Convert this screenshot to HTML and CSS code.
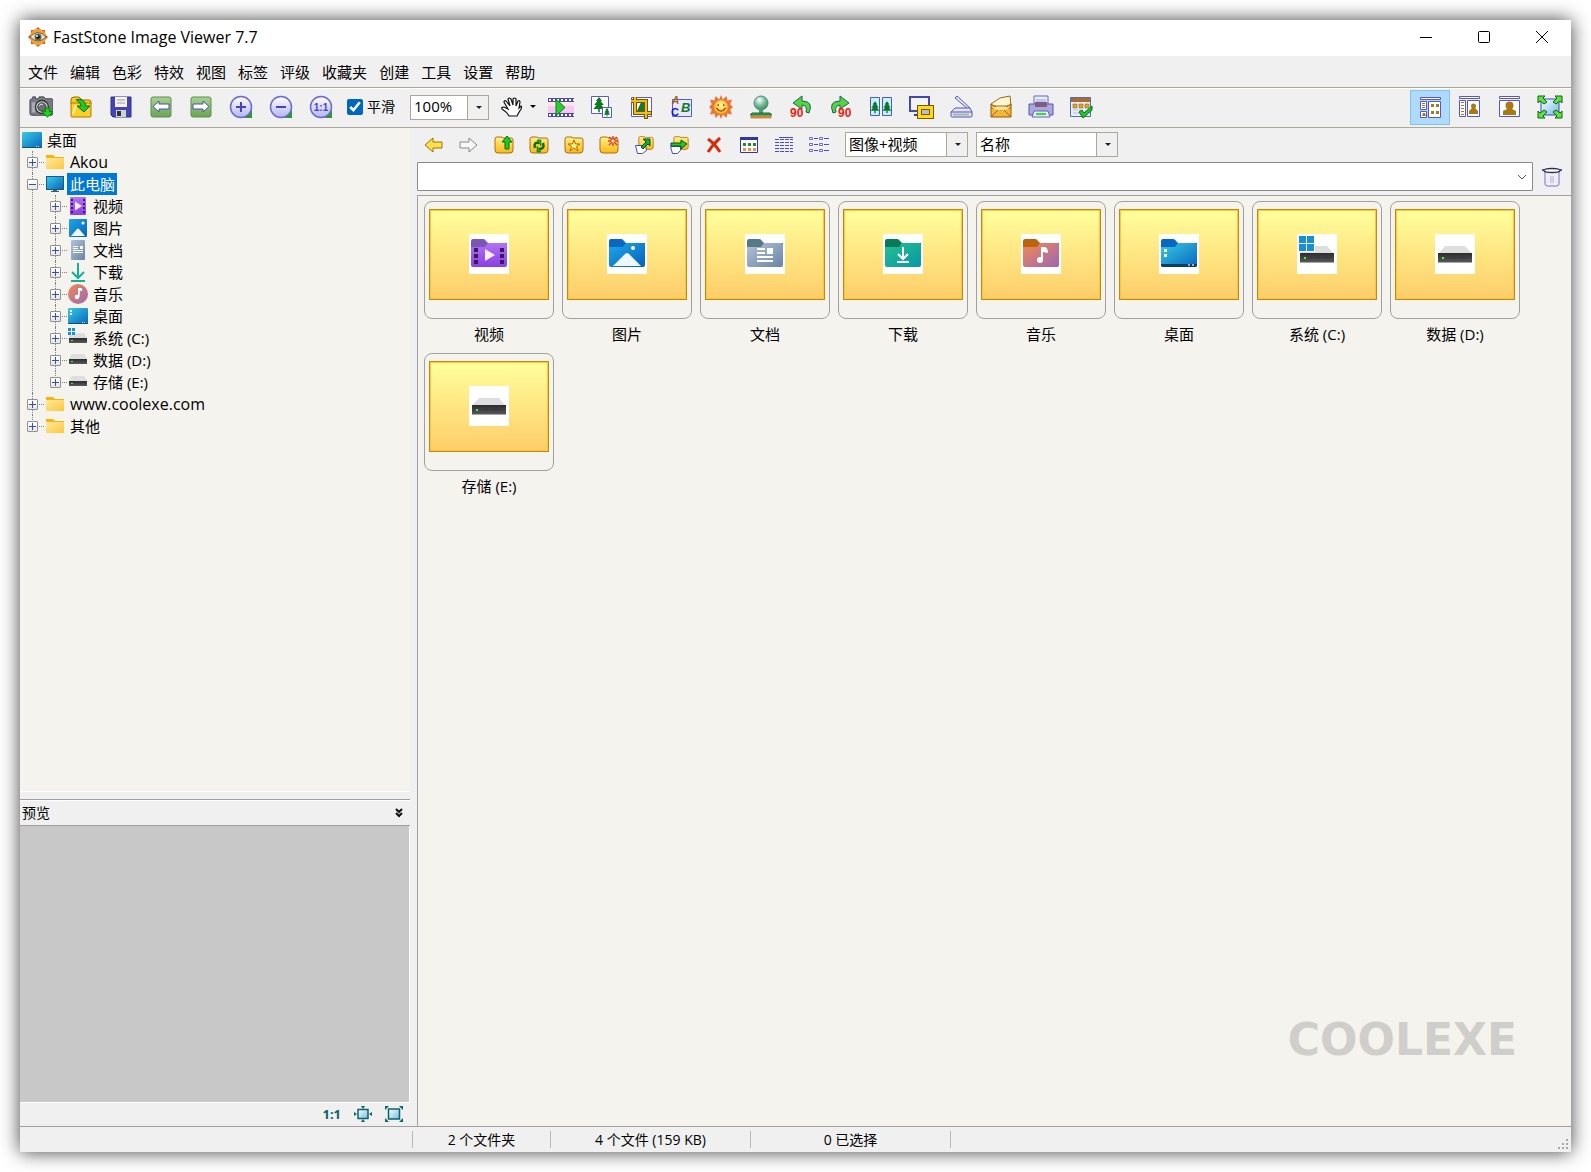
FILE: index.html
```html
<!DOCTYPE html>
<html lang="zh-CN">
<head>
    <meta charset="UTF-8">
    <meta name="viewport" content="width=device-width, initial-scale=1.0">
    <title>FastStone Image Viewer 7.7</title>
    <link rel="stylesheet" href="styles.css">
</head>
<body>
    <!-- 共用图标 -->
    <svg class="sprite" aria-hidden="true">
        <defs>
            <linearGradient id="gBlue" x1="0" y1="0" x2="1" y2="1"><stop offset="0" stop-color="#36cbe4"/><stop offset="1" stop-color="#0a66bd"/></linearGradient>
            <linearGradient id="gPic" x1="0" y1="0" x2="1" y2="1"><stop offset="0" stop-color="#1fa8ea"/><stop offset="1" stop-color="#0461b8"/></linearGradient>
            <linearGradient id="gPurple" x1="0" y1="0" x2="0" y2="1"><stop offset="0" stop-color="#b273f5"/><stop offset="1" stop-color="#8b3fe0"/></linearGradient>
            <linearGradient id="gDoc" x1="0" y1="0" x2="1" y2="1"><stop offset="0" stop-color="#b3c3d8"/><stop offset="1" stop-color="#6a84a5"/></linearGradient>
            <linearGradient id="gGreen" x1="0" y1="0" x2="1" y2="1"><stop offset="0" stop-color="#27c08c"/><stop offset="1" stop-color="#0697a8"/></linearGradient>
            <linearGradient id="gMusic" x1="0" y1="0" x2="1" y2="1"><stop offset="0" stop-color="#f38a52"/><stop offset="1" stop-color="#9d66b4"/></linearGradient>
            <linearGradient id="gFolder" x1="0" y1="0" x2="1" y2="1"><stop offset="0" stop-color="#ffe9a0"/><stop offset="1" stop-color="#fdc739"/></linearGradient>
            <linearGradient id="gGold" x1="0" y1="0" x2="0" y2="1"><stop offset="0" stop-color="#fff08a"/><stop offset="1" stop-color="#fdb813"/></linearGradient>
            <linearGradient id="gDrive" x1="0" y1="0" x2="0" y2="1"><stop offset="0" stop-color="#2c2c2e"/><stop offset="1" stop-color="#5a5a5c"/></linearGradient>
            <linearGradient id="gLens" x1="0" y1="0" x2="0" y2="1"><stop offset="0" stop-color="#ffffff"/><stop offset="1" stop-color="#b4b4f2"/></linearGradient>
            <linearGradient id="gNav" x1="0" y1="0" x2="0" y2="1"><stop offset="0" stop-color="#a9d28e"/><stop offset="1" stop-color="#69a554"/></linearGradient>
            <linearGradient id="gGlass" x1="0" y1="0" x2="1" y2="1"><stop offset="0" stop-color="#ffffff"/><stop offset="1" stop-color="#6fbbe8"/></linearGradient>
            <radialGradient id="gBall" cx=".4" cy=".3" r=".7"><stop offset="0" stop-color="#ffffff"/><stop offset=".5" stop-color="#7cc79a"/><stop offset="1" stop-color="#3f8a66"/></radialGradient>
            <radialGradient id="gSun" cx=".5" cy=".4" r=".6"><stop offset="0" stop-color="#fff6a0"/><stop offset="1" stop-color="#f6a81c"/></radialGradient>
        </defs>

        <!-- 文件夹与驱动器 -->
        <symbol id="i-folder" viewBox="0 0 20 20"><path d="M1 3h7l2 2h9v12H1z" fill="#f7b50c"/><path d="M1 6h18v11H1z" fill="url(#gFolder)"/></symbol>
        <symbol id="i-pc" viewBox="0 0 20 20"><path d="M1 2h18v14H1z" fill="#0e5d8c"/><path d="M2 3h16v12H2z" fill="url(#gBlue)"/><path d="M8 16h4v1h2v1H6v-1h2z" fill="#555"/></symbol>
        <symbol id="i-desktop" viewBox="0 0 20 20"><rect y="2" width="20" height="16" rx="1" fill="url(#gBlue)"/><path d="M0 17h20q0 1-1 1H1q-1 0-1-1z" fill="#07517f"/><path d="M14 16h1v1h-1zM16 16h1v1h-1z" fill="#cde"/></symbol>
        <symbol id="i-desktop2" viewBox="0 0 20 20"><use href="#i-desktop"/><path d="M2 4h2v2H2zM2 7h2v2H2z" fill="#fff"/></symbol>
        <symbol id="i-video" viewBox="0 0 20 20"><rect x="2" y="1" width="16" height="18" rx="1" fill="url(#gPurple)"/><path d="M3 3h2v2H3zM3 7h2v2H3zM3 11h2v2H3zM3 15h2v2H3zM15 3h2v2h-2zM15 7h2v2h-2zM15 11h2v2h-2zM15 15h2v2h-2z" fill="#3c1b78"/><path d="M7 5.500v9l7-4.500z" fill="#eee"/></symbol>
        <symbol id="i-picture" viewBox="0 0 20 20"><rect x="1" y="1" width="18" height="18" rx="1" fill="url(#gPic)"/><circle cx="15" cy="5" r="1.500" fill="#fff"/><path d="M3 18l6-7q1-1 2 0l6 7z" fill="#eef6ff"/></symbol>
        <symbol id="i-doc" viewBox="0 0 20 20"><rect x="3" y="0" width="14" height="20" rx="1" fill="url(#gDoc)"/><path d="M5 6h5v1H5zM5 8h5v1H5zM12 6h3v3h-3zM5 10h10v1H5zM5 12h10v1H5z" fill="#fff"/></symbol>
        <symbol id="i-download" viewBox="0 0 20 20"><path d="M10 1v14M4 10l6 6 6-6M3 19h14" fill="none" stroke="#18af97" stroke-width="2"/></symbol>
        <symbol id="i-music" viewBox="0 0 20 20"><circle cx="10" cy="10" r="10" fill="url(#gMusic)"/><path d="M10 4h4v3h-2.500v6" fill="#fff"/><circle cx="9" cy="13" r="2.300" fill="#fff"/><path d="M10 4h1.500v9H10z" fill="#fff"/></symbol>
        <symbol id="i-drive" viewBox="0 0 20 20"><path d="M4 4h12l3 5H1z" fill="#dedede"/><path d="M1 9h18v5H1z" fill="url(#gDrive)"/><path d="M3 11h2v1H3z" fill="#3f3"/></symbol>
        <symbol id="i-system" viewBox="0 0 20 20"><path d="M7 5h9l3 5H1V7h6z" fill="#dedede"/><path d="M1 10h18v5H1z" fill="url(#gDrive)"/><path d="M3 12h2v1H3z" fill="#3f3"/><path d="M0 0h3v3H0zM4 0h3v3H4zM0 4h3v3H0zM4 4h3v3H4z" fill="#1590dc"/></symbol>

        <!-- 缩略图 -->
        <symbol id="t-video" viewBox="0 0 40 40"><path d="M2 7q0-2 2-2h10q2 0 3 2l2 2h19v5H2z" fill="#7c56b6"/><path d="M2 13h14l3-4h17q2 0 2 2v20q0 2-2 2H4q-2 0-2-2z" fill="url(#gPurple)"/><path d="M5 14h4v4H5zM5 20h4v4H5zM5 26h4v4H5zM31 14h4v4h-4zM31 20h4v4h-4zM31 26h4v4h-4z" fill="#3b1768"/><path d="M16 15v12l10-6z" fill="#f3f0f7"/></symbol>
        <symbol id="t-picture" viewBox="0 0 40 40"><path d="M2 7q0-2 2-2h10q2 0 3 2l2 2h19v5H2z" fill="#0768c2"/><path d="M2 13h14l3-4h17q2 0 2 2v20q0 2-2 2H4q-2 0-2-2z" fill="url(#gPic)"/><circle cx="26" cy="14" r="2" fill="#fff"/><path d="M6 32l12-12q2-2 4 0l12 12z" fill="#eef6ff"/></symbol>
        <symbol id="t-doc" viewBox="0 0 40 40"><path d="M2 7q0-2 2-2h10q2 0 3 2l2 2h19v5H2z" fill="#557a86"/><path d="M2 13h14l3-4h17q2 0 2 2v20q0 2-2 2H4q-2 0-2-2z" fill="url(#gDoc)"/><path d="M12 14h8v2h-8zM12 18h8v2h-8zM22 14h6v6h-6zM12 22h16v2H12zM12 26h16v2H12z" fill="#fff"/></symbol>
        <symbol id="t-download" viewBox="0 0 40 40"><path d="M2 7q0-2 2-2h10q2 0 3 2l2 2h19v5H2z" fill="#067a5b"/><path d="M2 13h14l3-4h17q2 0 2 2v20q0 2-2 2H4q-2 0-2-2z" fill="url(#gGreen)"/><path d="M20 13v12M15 20l5 5 5-5M14 28h12" fill="none" stroke="#fff" stroke-width="2"/></symbol>
        <symbol id="t-music" viewBox="0 0 40 40"><path d="M2 7q0-2 2-2h10q2 0 3 2l2 2h19v5H2z" fill="#bb640c"/><path d="M2 13h14l3-4h17q2 0 2 2v20q0 2-2 2H4q-2 0-2-2z" fill="url(#gMusic)"/><path d="M20 13h4q3 1 3 6l-5-1v8h-2z" fill="#fff"/><circle cx="19" cy="26" r="3" fill="#fff"/></symbol>
        <symbol id="t-desktop" viewBox="0 0 40 40"><path d="M2 7q0-2 2-2h10q2 0 3 2l2 2h19v5H2z" fill="#0768c2"/><path d="M2 13h14l3-4h17q2 0 2 2v20q0 2-2 2H4q-2 0-2-2z" fill="url(#gBlue)"/><path d="M2 30h36v1q0 2-2 2H4q-2 0-2-2z" fill="#083d66"/><path d="M5 15h3v3H5zM5 20h3v3H5z" fill="#fff"/><path d="M29 30h2v2h-2zM33 30h2v2h-2z" fill="#aac"/></symbol>
        <symbol id="t-drive" viewBox="0 0 40 40"><path d="M10 12h20l7 8H3z" fill="#dedede"/><path d="M3 19h34v10H3z" fill="url(#gDrive)"/><path d="M3 28h34v1H3z" fill="#a8a8a8"/><path d="M7 23h2v2H7z" fill="#3f3"/><path d="M12 24h22" stroke="#333" stroke-dasharray="1 1"/></symbol>
        <symbol id="t-system" viewBox="0 0 40 40"><use href="#t-drive"/><path d="M1 1h17v17H1z" fill="#fff"/><path d="M2 2h7v7H2zM10 2h7v7h-7zM2 10h7v7H2zM10 10h7v7h-7z" fill="#1590dc"/></symbol>

        <!-- 20px 黄色文件夹底 -->
        <symbol id="i-gold" viewBox="0 0 20 20"><path d="M1 4q0-2 2-2h4q2 0 2 1h8q2 0 2 2v10q0 3-3 3H4q-3 0-3-3z" fill="url(#gGold)" stroke="#a87012"/></symbol>
        <symbol id="i-tree" viewBox="0 0 16 20"><path d="M8 0l4 5h-2l4 5h-3l4 5H9v4H7v-4H1l4-5H2l4-5H4z" fill="#0a7a22"/></symbol>
    </svg>

    <div class="window">
        <header class="titlebar">
            <svg class="logo" viewBox="0 0 20 20"><path d="M10 0l3 3h4v4l3 3-3 3v4h-4l-3 3-3-3H3v-4l-3-3 3-3V3h4z" fill="#e8512c"/><circle cx="10" cy="10" r="8" fill="#f2a42a"/><path d="M2 10q8-9 16 0q-8 8-16 0z" fill="#eee6d0" stroke="#6d6244"/><circle cx="10" cy="10" r="3.500" fill="#55695c"/><circle cx="10" cy="10" r="1.800" fill="#111"/><circle cx="9" cy="9" r="1" fill="#fff"/></svg>
            <h1>FastStone Image Viewer 7.7</h1>
            <div class="window-buttons">
                <button type="button" aria-label="最小化"><svg viewBox="0 0 14 14"><path d="M1 7.500h12"/></svg></button>
                <button type="button" aria-label="最大化"><svg viewBox="0 0 14 14"><rect x="1.500" y="1.500" width="11" height="11" rx="1"/></svg></button>
                <button type="button" aria-label="关闭"><svg viewBox="0 0 14 14"><path d="M1 1l12 12M13 1L1 13"/></svg></button>
            </div>
        </header>

        <nav class="menubar">
            <a href="#">文件</a>
            <a href="#">编辑</a>
            <a href="#">色彩</a>
            <a href="#">特效</a>
            <a href="#">视图</a>
            <a href="#">标签</a>
            <a href="#">评级</a>
            <a href="#">收藏夹</a>
            <a href="#">创建</a>
            <a href="#">工具</a>
            <a href="#">设置</a>
            <a href="#">帮助</a>
        </nav>

        <!-- 主工具栏 -->
        <div class="toolbar">
            <button type="button" aria-label="获取照片"><svg viewBox="0 0 26 24"><path d="M4 1h3v2h3l1-2h5l2 2h6q2 0 2 2v14q0 2-2 2H3q-2 0-2-2V5q0-2 3-2z" fill="#777b82" stroke="#45484e"/><path d="M3 7h4v11H3z" fill="#aaadb2"/><circle cx="14" cy="12" r="7" fill="#ddd" stroke="#333" stroke-width="1.500"/><circle cx="14" cy="12" r="4.500" fill="#6b6f76" stroke="#333"/><path d="M11 11q1-3 4-2" fill="none" stroke="#fff"/><path d="M18 13h4v4h4l-6 6-6-6h4z" fill="#10e010" stroke="#0a7a0a"/></svg></button>
            <button type="button" aria-label="打开"><svg viewBox="0 0 24 24"><path d="M2 5q0-3 3-3h5l3 3h7q2 0 2 2v2H2z" fill="#f6cc14" stroke="#a36a06"/><path d="M2 8h20v13q0 1-1 1H3q-1 0-1-1z" fill="#fbcf25" stroke="#b07808"/><path d="M4 19l3-9" stroke="#fff09a" stroke-width="2"/><path d="M7 5q8-3 10 6h4l-6 6-7-6h4q0-4-5-6z" fill="#1fc922" stroke="#0b6e10"/></svg></button>
            <button type="button" aria-label="保存"><svg viewBox="0 0 24 24"><path d="M2 2h20v20H4l-2-2z" fill="#4444b4" stroke="#30308f"/><path d="M6 2h12v10H6z" fill="#f2f2f2"/><path d="M8 5h8M8 8h8" stroke="#999"/><path d="M7 15h10v7H7z" fill="#cfd4cf"/><path d="M8 16h4v5H8z" fill="#333"/></svg></button>
            <button type="button" aria-label="上一张"><svg viewBox="0 0 24 24"><rect x="2" y="2" width="20" height="20" rx="2" fill="url(#gNav)" stroke="#5f8e52"/><path d="M4 11.500l6-5.500v3h10v5H10v3z" fill="#fff" stroke="#4a4fb4"/></svg></button>
            <button type="button" aria-label="下一张"><svg viewBox="0 0 24 24"><rect x="2" y="2" width="20" height="20" rx="2" fill="url(#gNav)" stroke="#5f8e52"/><path d="M20 11.500L14 6v3H4v5h10v3z" fill="#fff" stroke="#4a4fb4"/></svg></button>
            <button type="button" aria-label="放大"><svg viewBox="0 0 24 24"><path d="M23 15v8h-8z" fill="#2a9a2a"/><circle cx="12" cy="12" r="10.500" fill="url(#gLens)" stroke="#6a6ad0" stroke-width="1.500"/><path d="M12 7v10M7 12h10" stroke="#4545b8" stroke-width="2"/></svg></button>
            <button type="button" aria-label="缩小"><svg viewBox="0 0 24 24"><path d="M23 15v8h-8z" fill="#2a9a2a"/><circle cx="12" cy="12" r="10.500" fill="url(#gLens)" stroke="#6a6ad0" stroke-width="1.500"/><path d="M7 12h10" stroke="#4545b8" stroke-width="2"/></svg></button>
            <button type="button" aria-label="实际大小"><svg viewBox="0 0 24 24"><path d="M23 15v8h-8z" fill="#2a9a2a"/><circle cx="12" cy="12" r="10.500" fill="url(#gLens)" stroke="#6a6ad0" stroke-width="1.500"/><text class="g-one" x="12" y="16">1:1</text></svg></button>
            <label class="smooth"><input type="checkbox" checked>平滑</label>
            <span class="combo combo-zoom"><select aria-label="缩放比例"><option>100%</option></select></span>
            <button type="button" class="hand" aria-label="手形工具"><svg viewBox="0 0 24 24"><path d="M9 21q-2-4-7-7q-1-2 2-2l4 2L4 7q0-2 2-1l4 5L8 4q1-2 3 0l2 6V4q1-2 3 0v7l2-5q2-1 2 1l-1 6 2-2q1 1 0 3l-3 5-1 2z" fill="#fff" stroke="#111" stroke-width="1.200"/></svg><svg class="caret" viewBox="0 0 6 4"><path d="M0 0h6L3 3z"/></svg></button>
            <button type="button" aria-label="幻灯片"><svg class="wide" viewBox="0 0 26 24"><path d="M0 3h26v19H0z" fill="#4a4aa8"/><path d="M0 7h26v11H0z" fill="#f9c8ee"/><path d="M0 7h26v4H0z" fill="#fde4ef"/><path d="M1 5h25M1 20h25" stroke="#fff" stroke-width="2" stroke-dasharray="2 2"/><path d="M8 4l9 8.500L8 21z" fill="#2dcc2d" stroke="#0c7c18"/></svg></button>
            <button type="button" aria-label="调整大小"><svg viewBox="0 0 24 24"><path d="M2.500 1.500h17v17h-17z" fill="#fff" stroke="#5b5bd0"/><use href="#i-tree" x="3" y="2" width="14" height="16"/><path d="M13.500 12.500h9v10h-9z" fill="#fff" stroke="#5b5bd0"/><use href="#i-tree" x="14" y="13" width="8" height="9"/></svg></button>
            <button type="button" aria-label="裁剪"><svg viewBox="0 0 24 24"><path d="M2.500 2.500h20v19h-20z" fill="#fff" stroke="#5b5bd0"/><path d="M8 16l5-11 4 3v8z" fill="#137a35"/><path d="M2 6h15v18M6 2v16h17" fill="none" stroke="#7a5600" stroke-width="4"/><path d="M2 6h15v17M6 2v16h16" fill="none" stroke="#f0bd1a" stroke-width="2"/></svg></button>
            <button type="button" aria-label="绘图"><svg viewBox="0 0 24 24"><path d="M3.500 4.500h19v17h-19z" fill="#e8e8ff" stroke="#5b5bd0"/><text class="g-a" x="3" y="9">A</text><text class="g-b" x="12" y="17">B</text><text class="g-c" x="2" y="21">C</text></svg></button>
            <button type="button" aria-label="亮度"><svg class="wide" viewBox="0 0 26 26"><path d="M13 0l2 5 4-4 1 5 5-1-2 5 3 3-3 3 2 5-5-1-1 5-4-4-2 5-2-5-4 4-1-5-5 1 2-5-3-3 3-3-2-5 5 1 1-5 4 4z" fill="#f0713d"/><circle cx="13" cy="13" r="8" fill="url(#gSun)" stroke="#d88610"/><path d="M10 10v2M16 10v2" stroke="#84540a" stroke-width="1.500"/><path d="M8 14q5 7 10 0" fill="none" stroke="#84540a" stroke-width="1.500"/></svg></button>
            <button type="button" aria-label="克隆与修复"><svg viewBox="0 0 24 24"><circle cx="12" cy="8" r="7" fill="url(#gBall)" stroke="#5a7f9a"/><path d="M10 14h4v4h-4z" fill="#4c9d6f"/><path d="M3 18h18l2 2H1z" fill="#35b055" stroke="#136c32"/><path d="M2 21h20v2H2z" fill="#f09a3c" stroke="#a3510a" stroke-width=".6"/></svg></button>
            <button type="button" aria-label="向左旋转"><svg viewBox="0 0 24 24"><path d="M20 18q5-12-7-12V1L4 8l9 6v-4q6 1 4 7z" fill="#54d63a" stroke="#1f5f6d"/><text class="g-turn" x="1" y="22">90</text></svg></button>
            <button type="button" aria-label="向右旋转"><svg viewBox="0 0 24 24"><path d="M4 18Q-1 6 11 6V1l9 7-9 6v-4q-6 1-4 7z" fill="#54d63a" stroke="#1f5f6d"/><text class="g-turn" x="9" y="22">90</text></svg></button>
            <button type="button" aria-label="比较"><svg viewBox="0 0 24 24"><path d="M1.500 2.500h9v18h-9zM13.500 2.500h9v18h-9z" fill="#c8f2fb" stroke="#4f58c8"/><use href="#i-tree" x="1" y="5" width="10" height="15"/><use href="#i-tree" x="13" y="5" width="10" height="15"/></svg></button>
            <button type="button" aria-label="墙纸"><svg class="wide" viewBox="0 0 26 24"><path d="M2 2h19v14H2z" fill="#f2f4fa" stroke="#4646b0" stroke-width="2"/><path d="M6 19h8v2H6z" fill="#3d3d8c"/><path d="M11.500 12.500h12v9h-12z" fill="#b9bce0" stroke="#7c5a00" stroke-width="5"/><path d="M11.500 12.500h12v9h-12z" fill="none" stroke="#ffd91a" stroke-width="3"/></svg></button>
            <button type="button" aria-label="扫描"><svg viewBox="0 0 24 24"><path d="M8 1l13 12-2 1L6 3z" fill="#e8e8fa" stroke="#5555b4"/><path d="M6 13h15l2 4v4q0 1-1 1H3q-1 0-1-1v-4z" fill="#e4e4f6" stroke="#5555b4"/><path d="M2 17h21" stroke="#5555b4"/><path d="M4 19.500h16" stroke="#9fb8a8" stroke-width="2"/></svg></button>
            <button type="button" aria-label="电子邮件"><svg viewBox="0 0 24 24"><path d="M2 9l9-6 10-2 1 10H3z" fill="#fff6d6" stroke="#9a680c"/><path d="M2 9l10 6L22 9v13H2z" fill="#f3b63a" stroke="#8f5c06"/><path d="M2 13h20M2 22l8-8M22 22l-8-8" fill="none" stroke="#9a680c"/><path d="M3 12h18l-4 3H7z" fill="#fde28c"/></svg></button>
            <button type="button" aria-label="打印"><svg class="wide" viewBox="0 0 26 24"><path d="M6 1h14v9H6z" fill="#e8f0ff" stroke="#6464c0"/><path d="M8 4h10v3H8z" fill="#b8c8f0"/><path d="M1 9h24v11H1z" fill="#a9a9dc" stroke="#5555a8"/><path d="M7 7h12v5H7z" fill="#845b80"/><path d="M6 16h14l2 6H4z" fill="#e9e9f8" stroke="#6464c0"/><path d="M8 18h10v2H8z" fill="#2ce02c"/></svg></button>
            <button type="button" aria-label="设置"><svg viewBox="0 0 24 24"><path d="M1.500 2.500h20v19h-20z" fill="#e8effc" stroke="#4f6fb0"/><path d="M2 3h19v4H2z" fill="#a86a34"/><path d="M4 9h4v4H4zM10 9h4v4h-4zM16 9h4v4h-4z" fill="#e0a030" stroke="#9c6a12" stroke-width=".6"/><path d="M4 15h8M4 18h6" stroke="#b8c4dc"/><path d="M10 17l3-2 2 3 8-7v4l-9 8z" fill="#22c52c" stroke="#086b14"/></svg></button>

            <div class="view-modes">
                <button type="button" class="active" aria-label="浏览"><svg viewBox="0 0 24 24"><path d="M2.500 2.500h20v2h-20zM2.500 6.500h6v8h-6zM2.500 16.500h6v6h-6zM10.500 6.500h12v16h-12z" fill="#fff" stroke="#5656cc"/><path d="M4 8h3v1H4zM4 10h3v1H4zM4 12h3v1H4zM13 9h3v3h-3zM18 9h3v3h-3zM13 16h3v3h-3zM18 16h3v3h-3zM4 21h4l-1-3H5z" fill="#a87a14"/></svg></button>
                <button type="button" aria-label="窗口"><svg viewBox="0 0 24 24"><path d="M1.500 1.500h20v2h-20zM1.500 5.500h6v16h-6zM9.500 5.500h12v16h-12z" fill="#fff" stroke="#5656cc"/><path d="M4.500 7v13" stroke="#a87a14" stroke-width="3" stroke-dasharray="1 2"/><circle cx="15.500" cy="11" r="2.500" fill="#a87a14"/><path d="M11 19v-3l3-3h3l3 3v3z" fill="#a87a14"/></svg></button>
                <button type="button" aria-label="查看"><svg viewBox="0 0 24 24"><path d="M1.500 1.500h20v2h-20zM1.500 5.500h20v16h-20z" fill="#fff" stroke="#5656cc"/><circle cx="11.500" cy="10.500" r="4" fill="#a87a14"/><path d="M5 20v-4l4-2h5l4 2v4z" fill="#a87a14"/></svg></button>
                <button type="button" aria-label="全屏"><svg class="wide" viewBox="0 0 26 24"><path d="M4 4h18v16H4z" fill="url(#gGlass)" stroke="#4444c0"/><path d="M1 1h7L6 3l4 4-3 2-4-3-2 2zM25 1h-7l2 2-4 4 3 2 4-3 2 2zM1 23h7l-2-2 4-4-3-2-4 3-2-2zM25 23h-7l2-2-4-4 3-2 4 3 2-2z" fill="#5fe03c" stroke="#0d6415"/></svg></button>
            </div>
        </div>

        <div class="workspace">
            <aside class="sidebar">
                <!-- 目录树 -->
                <div class="tree">
                    <div class="node root"><svg><use href="#i-desktop"/></svg><span>桌面</span></div>
                    <ul>
                        <li><div class="node"><button type="button" class="toggle" aria-label="展开"></button><svg><use href="#i-folder"/></svg><span class="latin">Akou</span></div></li>
                        <li>
                            <div class="node"><button type="button" class="toggle open" aria-label="折叠"></button><svg><use href="#i-pc"/></svg><span class="selected">此电脑</span></div>
                            <ul>
                                <li><div class="node"><button type="button" class="toggle" aria-label="展开"></button><svg><use href="#i-video"/></svg><span>视频</span></div></li>
                                <li><div class="node"><button type="button" class="toggle" aria-label="展开"></button><svg><use href="#i-picture"/></svg><span>图片</span></div></li>
                                <li><div class="node"><button type="button" class="toggle" aria-label="展开"></button><svg><use href="#i-doc"/></svg><span>文档</span></div></li>
                                <li><div class="node"><button type="button" class="toggle" aria-label="展开"></button><svg><use href="#i-download"/></svg><span>下载</span></div></li>
                                <li><div class="node"><button type="button" class="toggle" aria-label="展开"></button><svg><use href="#i-music"/></svg><span>音乐</span></div></li>
                                <li><div class="node"><button type="button" class="toggle" aria-label="展开"></button><svg><use href="#i-desktop2"/></svg><span>桌面</span></div></li>
                                <li><div class="node"><button type="button" class="toggle" aria-label="展开"></button><svg><use href="#i-system"/></svg><span>系统 (C:)</span></div></li>
                                <li><div class="node"><button type="button" class="toggle" aria-label="展开"></button><svg><use href="#i-drive"/></svg><span>数据 (D:)</span></div></li>
                                <li><div class="node"><button type="button" class="toggle" aria-label="展开"></button><svg><use href="#i-drive"/></svg><span>存储 (E:)</span></div></li>
                            </ul>
                        </li>
                        <li><div class="node"><button type="button" class="toggle" aria-label="展开"></button><svg><use href="#i-folder"/></svg><span class="latin">www.coolexe.com</span></div></li>
                        <li><div class="node"><button type="button" class="toggle" aria-label="展开"></button><svg><use href="#i-folder"/></svg><span>其他</span></div></li>
                    </ul>
                </div>

                <!-- 预览 -->
                <section class="preview">
                    <div class="preview-header">
                        <h2>预览</h2>
                        <button type="button" aria-label="收起预览"><svg viewBox="0 0 8 10"><path d="M1 1l3 3 3-3M1 5l3 3 3-3"/></svg></button>
                    </div>
                    <div class="preview-image"></div>
                    <div class="preview-tools">
                        <button type="button" class="ratio">1:1</button>
                        <button type="button" aria-label="适合大小"><svg viewBox="0 0 18 16"><path d="M4 3.500h10v9H4z" fill="url(#gGlass)" stroke="#0c6464" stroke-width="1.500"/><path d="M7 0h4L9 3zM7 16h4l-2-3zM0 6v4l3-2zM18 6v4l-3-2z" fill="#0c6464"/></svg></button>
                        <button type="button" aria-label="填满窗口"><svg viewBox="0 0 18 16"><path d="M3.500 3h11v10h-11z" fill="url(#gGlass)" stroke="#0c6464" stroke-width="1.500"/><path d="M0 0h4L0 4zM18 0h-4l4 4zM0 16h4l-4-4zM18 16h-4l4-4z" fill="#0c6464"/></svg></button>
                    </div>
                </section>
            </aside>

            <main class="browser">
                <div class="browser-tools">
                    <button type="button" aria-label="后退"><svg viewBox="0 0 20 20"><path d="M1 10l8-7v4h9v6H9v4z" fill="#fde04a" stroke="#a26d00"/></svg></button>
                    <button type="button" aria-label="前进"><svg viewBox="0 0 20 20"><path d="M18 10l-8-7v4H1v6h9v4z" fill="#f6f6f6" stroke="#888"/></svg></button>
                    <button type="button" aria-label="向上"><svg viewBox="0 0 20 20"><use href="#i-gold"/><path d="M13 1l5 6h-3v7h-4V7H8z" fill="#1fc922" stroke="#0a6c12"/></svg></button>
                    <button type="button" aria-label="刷新"><svg viewBox="0 0 20 20"><use href="#i-gold"/><path d="M6 13q-2-6 4-5M14 8q2 6-4 6" fill="none" stroke="#0a6c12" stroke-width="2.500"/><path d="M8 5h4v6zM12 17H8v-6z" fill="#1fa922" stroke="#0a6c12" stroke-width=".6"/></svg></button>
                    <button type="button" aria-label="收藏"><svg viewBox="0 0 20 20"><use href="#i-gold"/><path d="M10 5l1.500 4H16l-3.500 2.500L14 16l-4-3-4 3 1.500-4.500L4 9h4.500z" fill="#fff27a" stroke="#a86a00"/></svg></button>
                    <button type="button" aria-label="新建文件夹"><svg viewBox="0 0 20 20"><use href="#i-gold"/><path d="M14 1v10M9 6h10M10 2l8 8M18 2l-8 8" stroke="#e83a1c" stroke-width="1.400"/><circle cx="14" cy="6" r="1.500" fill="#fff"/></svg></button>
                    <button type="button" aria-label="复制到"><svg viewBox="0 0 20 20"><use href="#i-gold" x="4" width="16" height="16"/><path d="M1.500 10.500h10l1 5-4 3h-5z" fill="#fff" stroke="#4a4ab0"/><path d="M9 4h7v7l-2-2-5 5-2-2 5-5z" fill="#1fa922" stroke="#064f2a"/></svg></button>
                    <button type="button" aria-label="移动到"><svg viewBox="0 0 20 20"><use href="#i-gold" x="4" width="16" height="16"/><path d="M1.500 11.500h10v4l-3 3h-5z" fill="#fff" stroke="#4a4ab0"/><path d="M2 8h10V5l6 4-6 5v-3H2z" fill="#1fc922" stroke="#064f2a"/></svg></button>
                    <button type="button" aria-label="删除"><svg viewBox="0 0 20 20"><path d="M4 4q7 5 12 13M16 3Q9 9 4 17" fill="none" stroke="#d92b0a" stroke-width="3"/></svg></button>
                    <button type="button" aria-label="缩略图"><svg viewBox="0 0 20 20"><path d="M1.500 2.500h17v15h-17z" fill="#fff" stroke="#3434a8"/><path d="M1 2h18v3H1z" fill="#3434a8"/><path d="M4 8h3v3H4zM9 8h3v3H9zM14 8h3v3h-3z" fill="#228a2c"/><path d="M4 13h3v3H4zM9 13h3v3H9zM14 13h3v3h-3z" fill="#f09048"/></svg></button>
                    <button type="button" aria-label="详细资料"><svg viewBox="0 0 20 20"><path d="M5 2.500h14" stroke="#4a4ad0"/><path d="M1 4.500h18M1 7.500h18M1 10.500h18M1 13.500h18M1 16.500h18" stroke="#4a4ad0" stroke-dasharray="4 1"/></svg></button>
                    <button type="button" aria-label="列表"><svg viewBox="0 0 20 20"><path d="M.5 2.500h3v2h-3zM10.500 2.500h3v2h-3zM.5 8.500h3v2h-3zM10.500 8.500h3v2h-3zM.5 14.500h3v2h-3zM10.500 14.500h3v2h-3z" fill="#fff" stroke="#6a6ad8"/><path d="M5 3.500h4M15 3.500h5M5 9.500h4M15 9.500h5M5 15.500h4M15 15.500h5" stroke="#4a4ad0"/></svg></button>
                    <span class="combo combo-filter"><select aria-label="文件类型"><option>图像+视频</option></select></span>
                    <span class="combo combo-sort"><select aria-label="排序"><option>名称</option></select></span>
                </div>
                <div class="address-row">
                    <div class="address">
                        <input type="text" aria-label="路径">
                        <button type="button" aria-label="历史路径"><svg viewBox="0 0 10 6"><path d="M1 1l4 4 4-4"/></svg></button>
                    </div>
                    <button type="button" class="trash" aria-label="回收站"><svg viewBox="0 0 20 20"><path d="M3 4h14v13q0 2-3 2H6q-3 0-3-2z" fill="#eeeefa" stroke="#6f74c8"/><ellipse cx="10" cy="3.500" rx="8" ry="2" fill="#fff" stroke="#30304a" stroke-width="1.500"/><path d="M0 3h3M17 3h3" stroke="#4a4ab0" stroke-width="2"/><path d="M8 9h4v7H8z" fill="#cfcfe2"/></svg></button>
                </div>

                <!-- 文件夹缩略图 -->
                <div class="files">
                    <ul class="thumbs">
                        <li><div class="card"><div class="thumb"><svg><use href="#t-video"/></svg></div></div><p>视频</p></li>
                        <li><div class="card"><div class="thumb"><svg><use href="#t-picture"/></svg></div></div><p>图片</p></li>
                        <li><div class="card"><div class="thumb"><svg><use href="#t-doc"/></svg></div></div><p>文档</p></li>
                        <li><div class="card"><div class="thumb"><svg><use href="#t-download"/></svg></div></div><p>下载</p></li>
                        <li><div class="card"><div class="thumb"><svg><use href="#t-music"/></svg></div></div><p>音乐</p></li>
                        <li><div class="card"><div class="thumb"><svg><use href="#t-desktop"/></svg></div></div><p>桌面</p></li>
                        <li><div class="card"><div class="thumb"><svg><use href="#t-system"/></svg></div></div><p>系统 (C:)</p></li>
                        <li><div class="card"><div class="thumb"><svg><use href="#t-drive"/></svg></div></div><p>数据 (D:)</p></li>
                        <li><div class="card"><div class="thumb"><svg><use href="#t-drive"/></svg></div></div><p>存储 (E:)</p></li>
                    </ul>
                    <div class="watermark">COOLEXE</div>
                </div>
            </main>
        </div>

        <footer class="statusbar">
            <span class="status-info"></span>
            <span class="status-folders">2 个文件夹</span>
            <span class="status-files">4 个文件 (159 KB)</span>
            <span class="status-selected">0 已选择</span>
            <svg class="grip" viewBox="0 0 12 12"><path d="M8 0h2v2H8zM4 4h2v2H4zM8 4h2v2H8zM0 8h2v2H0zM4 8h2v2H4zM8 8h2v2H8z"/></svg>
        </footer>
    </div>
</body>
</html>
```
FILE: styles.css
```css
* {
    margin: 0;
    padding: 0;
    box-sizing: border-box;
}

body {
    height: 100vh;
    padding: 20px;
    background: #fff;
    color: #000;
    font-family: "Open Sans", "Noto Sans CJK SC", sans-serif;
    font-size: 15px;
    line-height: 22px;
}

ul {
    list-style: none;
}

button {
    border: none;
    background: none;
    color: inherit;
    font: inherit;
}

svg {
    display: block;
    flex: none;
}

.sprite {
    position: absolute;
    width: 0;
    height: 0;
}

.window {
    display: flex;
    flex-direction: column;
    height: 100%;
    background: #f0f0f0;
    box-shadow: 0 0 18px rgba(0, 0, 0, 0.75);
}

/* 标题栏 */
.titlebar {
    display: flex;
    align-items: center;
    gap: 5px;
    height: 36px;
    padding: 0 0 2px 8px;
    background: #fff;
}

.titlebar h1 {
    font-size: 16px;
    font-weight: normal;
}

.logo {
    width: 20px;
    height: 20px;
}

.window-buttons {
    display: flex;
    height: 100%;
    margin-left: auto;
}

.window-buttons button {
    display: flex;
    align-items: center;
    justify-content: center;
    width: 58px;
}

.window-buttons svg {
    width: 14px;
    height: 14px;
    fill: none;
    stroke: #000;
}

/* 菜单 */
.menubar {
    display: flex;
    align-items: center;
    gap: 12px;
    height: 32px;
    padding-left: 8px;
    border-bottom: 1px solid #aca899;
}

.menubar a {
    color: #000;
    text-decoration: none;
}

/* 主工具栏 */
.toolbar {
    display: flex;
    align-items: center;
    height: 40px;
    padding: 0 1px 2px;
    border-top: 1px solid #fff;
    border-bottom: 1px solid #aca899;
}

.toolbar button {
    display: flex;
    align-items: center;
    justify-content: center;
    width: 40px;
    height: 35px;
}

.toolbar svg {
    width: 24px;
    height: 24px;
}

.toolbar .wide {
    width: 26px;
}

.toolbar .hand {
    gap: 6px;
    width: 52px;
    padding-left: 6px;
}

.toolbar .caret {
    width: 6px;
    height: 4px;
}

.smooth {
    display: flex;
    align-items: center;
    gap: 4px;
    width: 69px;
    padding-left: 6px;
    font-size: 14px;
}

.smooth input {
    width: 16px;
    height: 16px;
    accent-color: #0067c0;
}

.g-one {
    fill: #4545b8;
    font: bold 10px "Liberation Sans", sans-serif;
    text-anchor: middle;
}

.g-a {
    fill: #a2621c;
    font: italic bold 10px "Liberation Sans", sans-serif;
}

.g-b {
    fill: #117a22;
    font: italic bold 13px "Liberation Sans", sans-serif;
}

.g-c {
    fill: #1414d8;
    font: bold 11px "Liberation Sans", sans-serif;
}

.g-turn {
    fill: #ee2010;
    font: bold 12px "Liberation Sans", sans-serif;
}

.view-modes {
    display: flex;
    margin-left: auto;
}

.view-modes .active {
    border: 1px solid #7cc4fa;
    background: #b0dafa;
}

/* 下拉框 */
.combo {
    position: relative;
    height: 25px;
}

.combo select {
    appearance: none;
    width: 100%;
    height: 100%;
    padding: 0 22px 2px 3px;
    border: 1px solid #aca899;
    border-radius: 0;
    background: #fff;
    color: #000;
    font: inherit;
    line-height: 20px;
}

.combo::before {
    content: "";
    position: absolute;
    top: 1px;
    right: 1px;
    bottom: 1px;
    width: 20px;
    border-left: 1px solid #aca899;
    background: #f0f0f0;
    pointer-events: none;
}

.combo::after {
    content: "";
    position: absolute;
    top: 11px;
    right: 7px;
    border: 3px solid transparent;
    border-top-color: #222;
    pointer-events: none;
}

.combo-zoom {
    width: 79px;
}

.combo-filter {
    width: 123px;
    margin-left: 8px;
}

.combo-sort {
    width: 142px;
    margin-left: 8px;
}

.workspace {
    display: flex;
    flex: 1;
    min-height: 0;
    gap: 7px;
}

/* 左侧 */
.sidebar {
    display: flex;
    flex-direction: column;
    flex: none;
    width: 390px;
}

.tree {
    flex: 1;
    padding-top: 1px;
    border-bottom: 1px solid #fff;
    background: #f4f3ee;
}

.node {
    display: flex;
    align-items: center;
    height: 22px;
}

.node svg {
    width: 20px;
    height: 20px;
}

.node span {
    margin-left: 2px;
    padding: 0 2px 0 3px;
}

.node .latin {
    font-size: 16px;
}

.root {
    padding-left: 2px;
}

.node .selected {
    background: #0078d7;
    color: #fff;
}

.tree ul ul {
    padding-left: 16px;
}

.tree li {
    position: relative;
    padding-left: 7px;
}

/* 虚线连接 */
.tree li::before {
    content: "";
    position: absolute;
    top: 0;
    left: 12px;
    height: 100%;
    border-left: 1px dotted #808080;
}

.tree li:last-child::before {
    height: 11px;
}

.toggle {
    position: relative;
    width: 11px;
    height: 11px;
    margin-right: 7px;
    border: 1px solid #919191;
    border-radius: 1px;
    background:
        linear-gradient(#3c50a0, #3c50a0) center / 7px 1px no-repeat,
        linear-gradient(#3c50a0, #3c50a0) center / 1px 7px no-repeat,
        linear-gradient(#fff, #e4e4e4);
}

.toggle.open {
    background:
        linear-gradient(#3c50a0, #3c50a0) center / 7px 1px no-repeat,
        linear-gradient(#fff, #e4e4e4);
}

.toggle::after {
    content: "";
    position: absolute;
    top: 4px;
    left: 11px;
    width: 5px;
    border-top: 1px dotted #808080;
}

/* 预览 */
.preview {
    margin-top: 7px;
    border-top: 1px solid #a0a0a0;
}

.preview-header {
    display: flex;
    align-items: center;
    justify-content: space-between;
    height: 26px;
    padding: 0 7px 0 2px;
    border-top: 1px solid #fff;
    border-bottom: 1px solid #a0a0a0;
}

.preview-header h2 {
    font-size: 14px;
    font-weight: normal;
}

.preview-header svg {
    width: 8px;
    height: 10px;
    fill: none;
    stroke: #111;
    stroke-width: 2;
}

.preview-image {
    height: 277px;
    border-right: 1px solid #fff;
    border-bottom: 1px solid #fff;
    background: #c8c8c8;
}

.preview-tools {
    display: flex;
    align-items: center;
    justify-content: flex-end;
    gap: 13px;
    height: 23px;
    padding: 0 7px 2px 0;
}

.preview-tools svg {
    width: 18px;
    height: 16px;
}

.ratio {
    color: #0c6464;
    font-family: "Noto Sans", sans-serif;
    font-size: 13px;
    font-weight: bold;
}

/* 右侧 */
.browser {
    display: flex;
    flex-direction: column;
    flex: 1;
    min-width: 0;
}

.browser-tools {
    display: flex;
    align-items: center;
    height: 34px;
    padding-bottom: 1px;
}

.browser-tools button {
    display: flex;
    align-items: center;
    justify-content: center;
    width: 35px;
    height: 30px;
    padding-right: 1px;
}

.browser-tools svg,
.trash svg {
    width: 20px;
    height: 20px;
}

.address-row {
    display: flex;
    align-items: center;
    height: 29px;
    margin-bottom: 4px;
}

.address {
    display: flex;
    flex: 1;
    height: 100%;
    border: 1px solid #8a8a8a;
    border-radius: 1px;
    background: #fff;
}

.address input {
    flex: 1;
    min-width: 0;
    padding: 0 4px;
    border: none;
    outline: none;
    font: inherit;
}

.address button {
    width: 20px;
}

.address svg {
    width: 10px;
    height: 6px;
    margin: 0 auto;
    fill: none;
    stroke: #555;
}

.trash {
    display: flex;
    justify-content: center;
    width: 38px;
}

.files {
    position: relative;
    flex: 1;
    padding: 5px 6px;
    border: solid #a0a0a0;
    border-width: 1px 0 0 1px;
    background: #f4f3ee;
}

.thumbs {
    display: flex;
    flex-wrap: wrap;
    gap: 8px;
}

.thumbs li {
    width: 130px;
    height: 144px;
    text-align: center;
}

.card {
    height: 118px;
    margin-bottom: 4px;
    padding: 7px 4px;
    border: 1px solid #a0a0a0;
    border-radius: 8px;
}

.thumb {
    display: flex;
    align-items: center;
    justify-content: center;
    height: 91px;
    padding-bottom: 1px;
    border: 1px solid #c48a00;
    background: linear-gradient(#ffff9c, #fdcd69);
    box-shadow: inset 0 0 1px 1px #f6c544;
}

.thumb svg {
    width: 40px;
    height: 40px;
    background: #fff;
}

.watermark {
    position: absolute;
    right: 54px;
    bottom: 62px;
    color: #cfcecb;
    font-family: "DejaVu Sans", sans-serif;
    font-size: 44px;
    font-weight: bold;
    line-height: 48px;
}

/* 状态栏 */
.statusbar {
    display: flex;
    align-items: center;
    height: 26px;
    border-top: 1px solid #a0a0a0;
    font-size: 14px;
}

.statusbar span {
    height: 17px;
    border-right: 1px solid #b8b8b8;
    line-height: 17px;
    text-align: center;
}

.status-info {
    width: 393px;
}

.status-folders {
    width: 138px;
}

.status-files,
.status-selected {
    width: 200px;
}

.grip {
    align-self: flex-end;
    width: 12px;
    height: 12px;
    margin: 0 1px 1px auto;
    fill: #a8a8a8;
}
```
